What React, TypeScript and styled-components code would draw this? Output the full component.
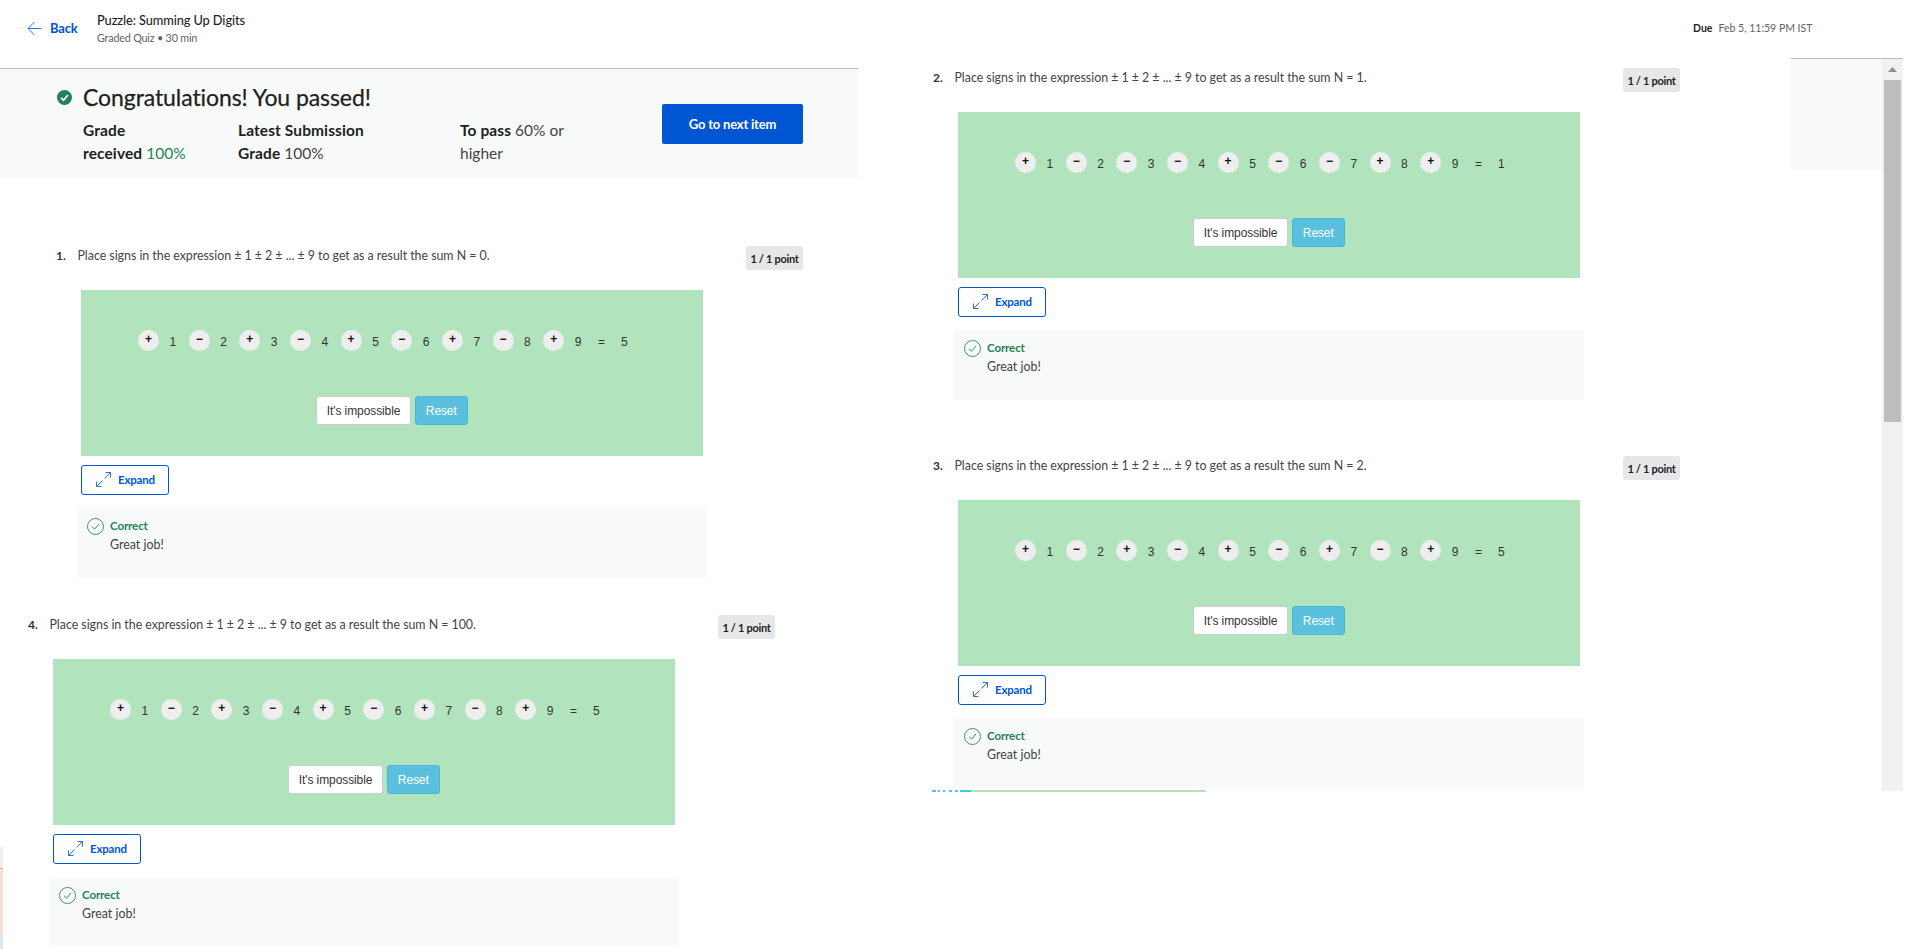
import React from "react";
import styled, { createGlobalStyle } from "styled-components";

const Global = createGlobalStyle`
  html, body { margin: 0; padding: 0; background: #fff; overflow: hidden; }
  * { box-sizing: border-box; }
  body { font-family: "Lato", "Noto Sans", sans-serif; color: #1f1f1f; }
`;

const Page = styled.div`
  position: relative;
  display: flex;
  width: 1920px;
  height: 949px;
  overflow: hidden;
  background: #fff;
`;
const LeftPane = styled.div`
  width: 858px;
  flex: none;
  display: flex;
  flex-direction: column;
`;
const RightPane = styled.div`
  flex: 1;
  display: flex;
  flex-direction: column;
`;
const Header = styled.header`
  height: 69px;
  flex: none;
  display: flex;
  border-bottom: 1px solid #bdbdbd;
  padding-left: 27px;
`;
const BackLink = styled.a`
  display: flex;
  align-items: center;
  gap: 8px;
  height: 56px;
  width: 70px;
  font-size: 13px;
  font-weight: 700;
  letter-spacing: -0.2px;
  color: #0056d2;
`;
const TitleBlock = styled.div`
  display: flex;
  flex-direction: column;
  padding-top: 11px;
`;
const QuizTitle = styled.div`
  font-size: 12.8px;
  line-height: 18px;
  letter-spacing: -0.1px;
  font-weight: 500;
  color: #1f1f1f;
`;
const QuizMeta = styled.div`
  font-size: 10.8px;
  line-height: 18px;
  letter-spacing: -0.2px;
  color: #636363;
`;
const Banner = styled.section`
  height: 110px;
  flex: none;
  display: flex;
  justify-content: space-between;
  background: #f7faf9;
  padding: 13px 55px 0 57px;
`;
const BannerMain = styled.div`
  display: flex;
  flex-direction: column;
`;
const BannerHeading = styled.h2`
  margin: 0;
  display: flex;
  align-items: center;
  gap: 11px;
  font-size: 23px;
  line-height: 30px;
  font-weight: 400;
  letter-spacing: -0.08px;
  -webkit-text-stroke: 0.25px #1f1f1f;
  color: #1f1f1f;
`;
const GradeRow = styled.div`
  display: grid;
  grid-template-columns: 155px 222px 130px;
  margin: 7px 0 0 26px;
`;
const GradeCell = styled.div`
  font-size: 15.5px;
  line-height: 23px;
  color: #444;
  & b { font-weight: 700; color: #1f1f1f; letter-spacing: 0.1px; }
`;
const GradeValue = styled.span`
  color: #1f8354;
`;
const NextButton = styled.button`
  width: 141px;
  height: 40px;
  margin-top: 22px;
  border: 0;
  border-radius: 2px;
  background: #0056d2;
  color: #fff;
  font-family: inherit;
  font-size: 13px;
  font-weight: 700;
  letter-spacing: -0.2px;
`;
const LeftList = styled.div`
  display: flex;
  flex-direction: column;
  gap: 37px;
  margin-top: 67px;
`;
const Question = styled.article<{ $x: number }>`
  width: 747px;
  margin-left: ${(p) => p.$x}px;
  flex: none;
`;
const QuestionHead = styled.div`
  display: flex;
  align-items: flex-start;
  height: 44px;
`;
const QNumber = styled.span`
  width: 21.5px;
  flex: none;
  font-size: 12px;
  line-height: 20px;
  font-weight: 700;
  color: #333;
`;
const QText = styled.span`
  flex: 1;
  font-size: 12.4px;
  line-height: 20px;
  letter-spacing: -0.03px;
  color: #444;
`;
const PointBadge = styled.span`
  width: 57px;
  height: 24px;
  flex: none;
  display: flex;
  align-items: center;
  justify-content: center;
  border-radius: 3px;
  background: #e5e7e8;
  font-size: 11px;
  font-weight: 700;
  letter-spacing: -0.3px;
  white-space: nowrap;
`;
const PuzzleBox = styled.div`
  width: 622px;
  height: 166px;
  margin-left: 25px;
  padding-top: 40px;
  background: #b1e3bc;
  font-family: "Liberation Sans", Arial, sans-serif;
`;
const SignRow = styled.div`
  display: flex;
  align-items: center;
  height: 21px;
  padding-left: 57px;
  font-size: 12px;
  color: #333;
`;
const SignCell = styled.div`
  display: flex;
  align-items: center;
  width: 50.67px;
  flex: none;
`;
const SignDisc = styled.span`
  width: 21px;
  height: 21px;
  flex: none;
  margin-right: 10.5px;
  padding-bottom: 4px;
  display: flex;
  align-items: center;
  justify-content: center;
  border-radius: 50%;
  background: #eee;
  color: #111;
  font-size: 12px;
  font-weight: 700;
  line-height: 1;
`;
const RowValue = styled.span`
  padding-top: 2px;
`;
const Equals = styled(RowValue)`
  margin: 0 16px 0 4px;
`;
const PuzzleButtons = styled.div`
  display: flex;
  justify-content: center;
  gap: 4px;
  margin-top: 45px;
`;
const PuzzleButton = styled.button<{ $primary?: boolean }>`
  height: 29px;
  padding: 0 ${(p) => (p.$primary ? 10 : 9.5)}px;
  border: 1px solid ${(p) => (p.$primary ? "#46b8da" : "#ccc")};
  border-radius: 3px;
  background: ${(p) => (p.$primary ? "#5bc0de" : "#fff")};
  color: ${(p) => (p.$primary ? "#fff" : "#333")};
  font-family: "Liberation Sans", Arial, sans-serif;
  font-size: 12px;
  letter-spacing: -0.1px;
`;
const ExpandButton = styled.button`
  display: flex;
  align-items: center;
  gap: 7px;
  width: 88px;
  height: 30px;
  margin: 9px 0 0 25px;
  padding: 0 0 2px 14px;
  border: 1px solid #0056d2;
  border-radius: 3px;
  background: #fff;
  color: #0056d2;
  font-family: "Lato", sans-serif;
  font-size: 11.5px;
  font-weight: 700;
  letter-spacing: -0.2px;
`;
const Feedback = styled.div`
  display: flex;
  gap: 6px;
  width: 630px;
  height: 70px;
  margin: 13px 0 0 21px;
  padding: 10px 0 0 10px;
  background: #f7faf9;
`;
const FeedbackText = styled.div`
  display: flex;
  flex-direction: column;
  margin-top: -2px;
  font-size: 12.4px;
  line-height: 19px;
  color: #444;
`;
const CorrectLabel = styled.strong`
  font-size: 11.5px;
  color: #1f8354;
  letter-spacing: -0.1px;
`;
const DueRow = styled.div`
  height: 58px;
  flex: none;
  padding: 19px 0 0 835px;
  font-size: 10.5px;
  line-height: 18px;
  color: #636363;
  white-space: nowrap;
  & b { color: #1f1f1f; margin-right: 6px; }
`;
const RightBody = styled.div`
  display: flex;
  flex: 1;
`;
const RightList = styled.div`
  width: 933px;
  flex: none;
  display: flex;
  flex-direction: column;
  gap: 56px;
  padding-top: 10px;
`;
const Rail = styled.aside`
  width: 112px;
  height: 733px;
  flex: none;
  display: flex;
  align-items: flex-start;
  border-top: 1px solid #bdbdbd;
`;
const SidePanel = styled.div`
  width: 91px;
  height: 110px;
  background: #f7faf9;
`;
const ScrollTrack = styled.div`
  width: 21px;
  height: 100%;
  display: flex;
  flex-direction: column;
  align-items: center;
  background: #f1f1f1;
`;
const ScrollArrow = styled.svg`
  width: 9px;
  height: 5px;
  margin: 8px 0 8px;
  flex: none;
`;
const ScrollThumb = styled.div`
  width: 17px;
  height: 342px;
  background: #bdbdbd;
`;
const ClipLine = styled.div`
  position: absolute;
  left: 932px;
  top: 790px;
  width: 274px;
  height: 1.5px;
  background: linear-gradient(
    to right,
    #4cc4ea 0 4px,
    transparent 4px 6px,
    #4cc4ea 6px 8px,
    transparent 8px 11px,
    #4cc4ea 11px 13px,
    transparent 13px 17px,
    #4cc4ea 17px 20px,
    transparent 20px 23px,
    #4cc4ea 23px 26px,
    transparent 26px 28px,
    #4cc4ea 28px 39px,
    #b1e3bc 39px
  );
`;
const EdgeStrip = styled.div`
  position: absolute;
  left: 0;
  top: 847px;
  width: 3px;
  height: 102px;
  background: linear-gradient(to bottom, #f1f1f1 0 21px, #bbb 21px 22px, #f8e0da 22px 91px, #d9e8f4 91px);
`;

const BackIcon = () => (
  <svg width="15" height="15" viewBox="0 0 15 15" fill="none" stroke="#2a73dc" strokeWidth="1">
    <path d="M14.5 7.5H1M7.5 1L1 7.5L7.5 14" />
  </svg>
);
const PassIcon = () => (
  <svg width="15" height="15" viewBox="0 0 15 15">
    <circle cx="7.5" cy="7.5" r="7.5" fill="#1f8354" />
    <path d="M4 7.8L6.5 10.2L11 5" fill="none" stroke="#fff" strokeWidth="1.8" />
  </svg>
);
const ExpandIcon = () => (
  <svg width="15" height="15" viewBox="0 0 15 15" fill="none" stroke="#2a73dc" strokeWidth="1" style={{ flex: "none" }}>
    <path d="M14.5 0.5L8.5 6.5M9.5 0.5H14.5V5.5M0.5 14.5L6.5 8.5M0.5 9.5V14.5H5.5" />
  </svg>
);
const CorrectIcon = () => (
  <svg width="17" height="17" viewBox="0 0 17 17" fill="none" stroke="#1f8354" style={{ flex: "none", opacity: 0.85 }}>
    <circle cx="8.5" cy="8.5" r="8" />
    <path d="M5 8.7L7.6 11.2L12 6" />
  </svg>
);

type QuizProps = { n: number; sum: number; signs: string; result: number; x: number };

const QuizQuestion = ({ n, sum, signs, result, x }: QuizProps) => (
  <Question $x={x}>
    <QuestionHead>
      <QNumber>{n}.</QNumber>
      <QText>Place signs in the expression ± 1 ± 2 ± ... ± 9 to get as a result the sum N = {sum}.</QText>
      <PointBadge>1 / 1 point</PointBadge>
    </QuestionHead>
    <PuzzleBox>
      <SignRow>
        {signs.split("").map((s, i) => (
          <SignCell key={i}>
            <SignDisc>{s === "+" ? "+" : "−"}</SignDisc>
            <RowValue>{i + 1}</RowValue>
          </SignCell>
        ))}
        <Equals>=</Equals>
        <RowValue>{result}</RowValue>
      </SignRow>
      <PuzzleButtons>
        <PuzzleButton>It's impossible</PuzzleButton>
        <PuzzleButton $primary>Reset</PuzzleButton>
      </PuzzleButtons>
    </PuzzleBox>
    <ExpandButton>
      <ExpandIcon />
      Expand
    </ExpandButton>
    <Feedback>
      <CorrectIcon />
      <FeedbackText>
        <CorrectLabel>Correct</CorrectLabel>
        Great job!
      </FeedbackText>
    </Feedback>
  </Question>
);

export default function App() {
  return (
    <Page>
      <Global />
      <LeftPane>
        <Header>
          <BackLink>
            <BackIcon />
            Back
          </BackLink>
          <TitleBlock>
            <QuizTitle>Puzzle: Summing Up Digits</QuizTitle>
            <QuizMeta>Graded Quiz • 30 min</QuizMeta>
          </TitleBlock>
        </Header>
        <Banner>
          <BannerMain>
            <BannerHeading>
              <PassIcon />
              Congratulations! You passed!
            </BannerHeading>
            <GradeRow>
              <GradeCell>
                <b>Grade<br />received</b> <GradeValue>100%</GradeValue>
              </GradeCell>
              <GradeCell>
                <b>Latest Submission<br />Grade</b> 100%
              </GradeCell>
              <GradeCell>
                <b>To pass</b> 60% or<br />higher
              </GradeCell>
            </GradeRow>
          </BannerMain>
          <NextButton>Go to next item</NextButton>
        </Banner>
        <LeftList>
          <QuizQuestion n={1} sum={0} signs="+-+-+-+-+" result={5} x={56} />
          <QuizQuestion n={4} sum={100} signs="+-+-+-+-+" result={5} x={28} />
        </LeftList>
      </LeftPane>
      <RightPane>
        <DueRow>
          <b>Due</b>Feb 5, 11:59 PM IST
        </DueRow>
        <RightBody>
          <RightList>
            <QuizQuestion n={2} sum={1} signs="+---+--++" result={1} x={75} />
            <QuizQuestion n={3} sum={2} signs="+-+-+-+-+" result={5} x={75} />
          </RightList>
          <Rail>
            <SidePanel />
            <ScrollTrack>
              <ScrollArrow viewBox="0 0 9 5">
                <path d="M4.5 0L9 5H0Z" fill="#8f8f8f" />
              </ScrollArrow>
              <ScrollThumb />
            </ScrollTrack>
          </Rail>
        </RightBody>
      </RightPane>
      <ClipLine />
      <EdgeStrip />
    </Page>
  );
}
